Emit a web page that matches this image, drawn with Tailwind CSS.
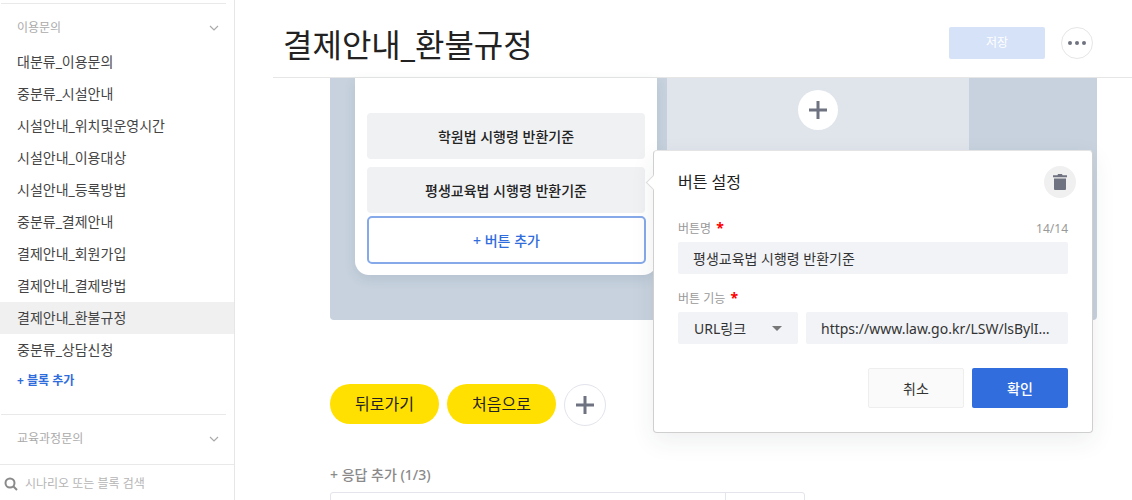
<!doctype html>
<html lang="ko">
<head>
<meta charset="utf-8">
<script src="https://cdn.jsdelivr.net/npm/@tailwindcss/browser@4"></script>
</head>
<body class="m-0 bg-white">
<div class="relative flex h-[500px] w-[1132px] overflow-hidden bg-white font-['Noto_Sans','Noto_Sans_CJK_KR',sans-serif] text-[#222]">
  <aside class="flex h-full w-[235px] shrink-0 flex-col border-r border-[#e6e6e6]">
    <div class="ml-px mt-[3px] w-[225px] border-t border-[#e9e9e9]"></div>
    <div class="flex h-[42px] items-center justify-between pl-[17px] pr-[15px] pt-[6px] text-[12px] text-[#aaa]">
      <span>이용문의</span>
      <svg class="h-[10px] w-[10px]" viewBox="0 0 10 10" fill="none" stroke="#aaa" stroke-width="1.2"><path d="M1 3l4 4 4-4"/></svg>
    </div>
    <ul class="text-[14px] leading-[32px] text-[#444]">
      <li class="pl-[17px]">대분류_이용문의</li>
      <li class="pl-[17px]">중분류_시설안내</li>
      <li class="pl-[17px]">시설안내_위치및운영시간</li>
      <li class="pl-[17px]">시설안내_이용대상</li>
      <li class="pl-[17px]">시설안내_등록방법</li>
      <li class="pl-[17px]">중분류_결제안내</li>
      <li class="pl-[17px]">결제안내_회원가입</li>
      <li class="pl-[17px]">결제안내_결제방법</li>
      <li class="bg-[#f0f0f1] pl-[17px]">결제안내_환불규정</li>
      <li class="pl-[17px]">중분류_상담신청</li>
    </ul>
    <div class="pl-[17px] pt-[2px] text-[12px] font-bold leading-[26px] text-[#2f6cdc]">+ 블록 추가</div>
    <div class="ml-px mt-[20px] w-[225px] border-t border-[#e9e9e9]"></div>
    <div class="flex h-[49px] items-center justify-between pb-[2px] pl-[17px] pr-[15px] text-[12px] text-[#aaa]">
      <span>교육과정문의</span>
      <svg class="h-[10px] w-[10px]" viewBox="0 0 10 10" fill="none" stroke="#aaa" stroke-width="1.2"><path d="M1 3l4 4 4-4"/></svg>
    </div>
    <div class="flex flex-1 items-center gap-[7px] border-t border-[#e9e9e9] pl-[4px] pt-[2px] text-[12px] text-[#b5b5b5]">
      <svg class="h-[14px] w-[14px]" viewBox="0 0 14 14" fill="none" stroke="#8a8a8a" stroke-width="2"><circle cx="6" cy="6" r="4.5"/><path d="M9.5 9.5L13 13"/></svg>
      <span>시나리오 또는 블록 검색</span>
    </div>
  </aside>

  <main class="flex min-w-0 flex-1 flex-col">
    <header class="ml-[38px] flex h-[78px] shrink-0 items-center border-b border-[#e6e6e6] pl-[10px] pr-[39px] pt-[9px]">
      <h1 class="flex-1 pt-[4px] text-[32px] font-normal leading-none text-[#222]">결제안내_환불규정</h1>
      <div class="flex h-[32px] w-[96px] items-center justify-center rounded-[2px] bg-[#d6e2f8] text-[12px] text-white">저장</div>
      <div class="ml-[16px] flex h-[32px] w-[32px] items-center justify-center gap-[3px] rounded-full border border-[#e6e6e6]">
        <span class="h-[4px] w-[4px] rounded-full bg-[#6f7280]"></span><span class="h-[4px] w-[4px] rounded-full bg-[#6f7280]"></span><span class="h-[4px] w-[4px] rounded-full bg-[#6f7280]"></span>
      </div>
    </header>

    <div class="ml-[95px] w-[767px]">
      <section class="flex h-[242px] gap-[10px] rounded-b-[4px] bg-[#c7d2de] pl-[25px]">
        <div class="h-[197px] w-[302px] rounded-b-[14px] bg-white px-[12px] pt-[35px] shadow-[0_4px_12px_rgba(60,80,110,0.12)]">
          <div class="flex h-[46px] w-[278px] items-center justify-center rounded-[4px] bg-[#f0f1f3] text-[14px] font-medium text-[#222]">학원법 시행령 반환기준</div>
          <div class="mt-[8px] flex h-[46px] w-[278px] items-center justify-center rounded-[4px] bg-[#f0f1f3] text-[14px] font-medium text-[#222]">평생교육법 시행령 반환기준</div>
          <div class="mt-[3px] flex h-[48px] w-[279px] items-center justify-center rounded-[5px] border-2 border-[#86a9ea] text-[14px] font-medium text-[#2f6cdc]">+ 버튼 추가</div>
        </div>
        <div class="flex h-[242px] w-[302px] justify-center bg-[#e0e5ec] pt-[12px]">
          <div class="flex h-[40px] w-[40px] items-center justify-center rounded-full bg-white">
            <svg class="h-[18px] w-[18px]" viewBox="0 0 18 18" fill="#6f7280"><path d="M7.5 0h3v7.5H18v3h-7.5V18h-3v-7.5H0v-3h7.5z"/></svg>
          </div>
        </div>
      </section>

      <div class="mt-[64px] flex items-start gap-[8px]">
        <div class="flex h-[40px] w-[109px] items-center justify-center rounded-full bg-[#ffe000] text-[16px] text-[#222]">뒤로가기</div>
        <div class="flex h-[40px] w-[109px] items-center justify-center rounded-full bg-[#ffe000] text-[16px] text-[#222]">처음으로</div>
        <div class="flex h-[42px] w-[42px] items-center justify-center rounded-full border border-[#e3e4ec]">
          <svg class="h-[18px] w-[18px]" viewBox="0 0 18 18" fill="#6f7280"><path d="M7.5 0h3v7.5H18v3h-7.5V18h-3v-7.5H0v-3h7.5z"/></svg>
        </div>
      </div>
      <div class="mt-[40px] text-[14px] font-medium leading-[18px] text-[#8a8a8a]">+ 응답 추가 (1/3)</div>
      <div class="mt-[8px] flex h-[40px] w-[475px] rounded-[3px] border border-[#e3e4ec]">
        <div class="w-[395px] border-r border-[#e3e4ec]"></div>
      </div>
    </div>
  </main>

  <div class="absolute left-[653px] top-[150px] h-[283px] w-[440px] rounded-[4px] border border-[#cfcfcf] border-t-[#e4e4e4] bg-white px-[24px] shadow-[0_8px_24px_rgba(40,50,70,0.08)]">
    <span class="absolute -left-[6px] top-[26px] h-[11px] w-[11px] rotate-45 border-b border-l border-[#dcdcdc] bg-white"></span>
    <div class="flex h-[62px] items-center justify-between">
      <span class="text-[16px] text-[#222]">버튼 설정</span>
      <span class="-mr-[8px] flex h-[32px] w-[32px] items-center justify-center rounded-full bg-[#f0f0f0]">
        <svg class="h-[16px] w-[14px]" viewBox="0 0 14 16" fill="#6f7280"><path d="M5 0h4l.5 1.2H14v2H0v-2h4.5zM1 4.4h12V15a1 1 0 0 1-1 1H2a1 1 0 0 1-1-1z"/></svg>
      </span>
    </div>
    <div class="mt-[5px] flex h-[22px] items-center justify-between text-[12px] text-[#999]">
      <span>버튼명 <span class="ml-[2px] text-[14px] font-bold leading-none text-[#f00]">*</span></span><span>14/14</span>
    </div>
    <div class="mt-[2px] flex h-[32px] items-center rounded-[2px] bg-[#f2f3f7] px-[15px] text-[14px] text-[#333]">평생교육법 시행령 반환기준</div>
    <div class="mt-[14px] h-[22px] text-[12px] leading-[22px] text-[#999]">버튼 기능 <span class="ml-[2px] text-[14px] font-bold leading-none text-[#f00]">*</span></div>
    <div class="mt-[2px] flex gap-[8px]">
      <div class="flex h-[32px] w-[120px] items-center justify-between rounded-[2px] bg-[#f2f3f7] pl-[16px] pr-[16px] text-[14px] text-[#333]">
        <span>URL링크</span><span class="h-0 w-0 border-x-[5px] border-t-[5px] border-x-transparent border-t-[#777]"></span>
      </div>
      <div class="flex h-[32px] w-[262px] items-center rounded-[2px] bg-[#f2f3f7] px-[15px] text-[14px] text-[#333]">
        <span class="whitespace-nowrap">https://www.law.go.kr/LSW/lsBylI…</span>
      </div>
    </div>
    <div class="mt-[24px] flex justify-end gap-[8px]">
      <div class="flex h-[40px] w-[96px] items-center justify-center rounded-[2px] border border-[#eee] bg-[#fafafa] text-[14px] text-[#333]">취소</div>
      <div class="flex h-[40px] w-[96px] items-center justify-center rounded-[2px] bg-[#316ddc] text-[14px] font-medium text-white">확인</div>
    </div>
  </div>
</div>
</body>
</html>
